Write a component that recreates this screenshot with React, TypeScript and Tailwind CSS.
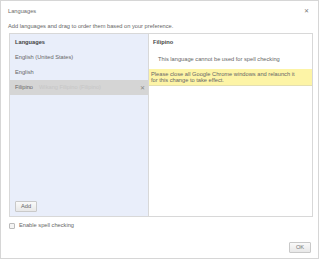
export default function App() {
  const font = { fontFamily: '"Liberation Sans", Arial, sans-serif' };
  return (
    <div className="w-[320px] h-[260px] bg-white" style={font}>
      <div className="w-[319px] h-[259px] border border-[#d6d6d6] flex flex-col px-[7px]">
        {/* title */}
        <div className="h-[19px] flex items-center justify-between pt-[1px]">
          <span className="text-[5.7px] text-[#6a6a6a]">Languages</span>
          <span className="text-[6px] text-[#777] leading-none mr-[2px]">✕</span>
        </div>
        <div className="h-[13px] flex items-center text-[5.7px] text-[#666]">
          Add languages and drag to order them based on your preference.
        </div>

        {/* panel */}
        <div className="ml-[1px] w-[304px] h-[184px] border border-[#d8d8d8] flex">
          <div className="w-[139px] bg-[#e9eefa] border-r border-[#d8d8d8] flex flex-col">
            <div className="h-[16px] flex items-center pl-[5px] text-[5.7px] font-bold text-[#444]">Languages</div>
            <div className="h-[15px] flex items-center pl-[5px] text-[5.7px] text-[#666]">English (United States)</div>
            <div className="h-[15px] flex items-center pl-[5px] text-[5.7px] text-[#666]">English</div>
            <div className="h-[15px] flex items-center pl-[5px] pr-[3px] bg-[#d5d5d5] text-[5.7px] text-[#666]">
              <span className="w-[24px]">Filipino</span>
              <span className="text-[#c6c6c6] flex-1">Wikang Filipino (Filipino)</span>
              <span className="text-[6px] text-[#888] leading-none">✕</span>
            </div>
            <div className="flex-1" />
            <div className="pl-[5px] pb-[4px]">
              <button className="w-[22px] h-[11px] border border-[#c9c9c9] rounded-[1px] bg-gradient-to-b from-[#fafafa] to-[#e8e8e8] text-[5.7px] text-[#666] flex items-center justify-center">
                Add
              </button>
            </div>
          </div>
          <div className="flex-1 flex flex-col">
            <div className="h-[16px] flex items-center pl-[4px] text-[5.7px] font-bold text-[#444]">Filipino</div>
            <div className="h-[19px] flex items-center pl-[9px] text-[5.7px] text-[#666]">
              This language cannot be used for spell checking
            </div>
            <div className="h-[17px] bg-[#fdf4a6] border-b border-[#e4dfb0] pl-[2px] flex flex-col justify-center text-[5.7px] text-[#666] leading-[6.5px]">
              <span>Please close all Google Chrome windows and relaunch it</span>
              <span>for this change to take effect.</span>
            </div>
          </div>
        </div>

        {/* spell checking */}
        <div className="h-[17px] flex items-center gap-[4px] ml-[1px]">
          <span className="w-[6px] h-[6px] border border-[#bbb] rounded-[1px] bg-[#f4f4f4]" />
          <span className="text-[5.7px] text-[#666]">Enable spell checking</span>
        </div>

        <div className="flex justify-end mt-[8px]">
          <button className="w-[22px] h-[11px] border border-[#c9c9c9] rounded-[1px] bg-gradient-to-b from-[#fafafa] to-[#e8e8e8] text-[5.7px] text-[#777] flex items-center justify-center">
            OK
          </button>
        </div>
      </div>
    </div>
  );
}
